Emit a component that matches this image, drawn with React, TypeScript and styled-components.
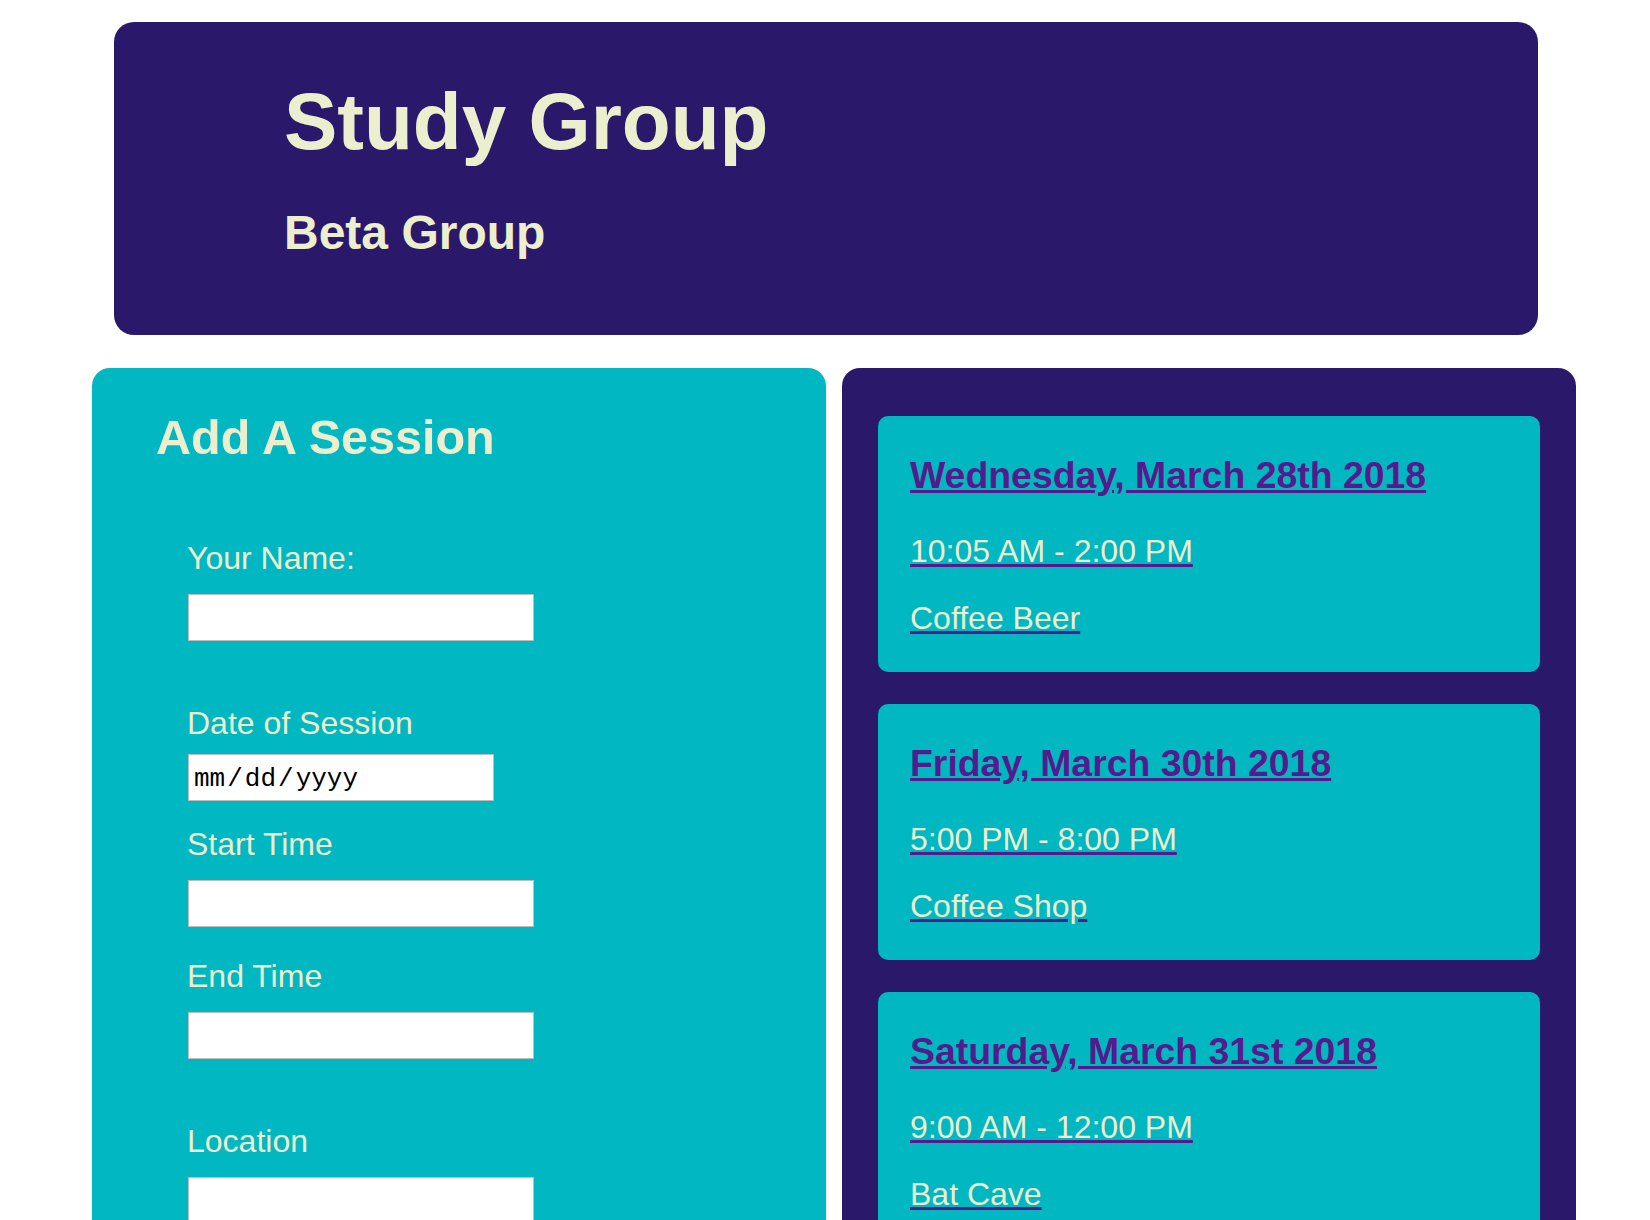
import React from "react";
import styled, { createGlobalStyle } from "styled-components";

const DARK = "#2a196b";
const TEAL = "#01b7c2";
const CREAM = "#ecefce";
const VISITED = "#551a8b";

const GlobalStyle = createGlobalStyle`
  html, body { margin: 0; padding: 0; background: #ffffff; }
  body { font-family: "Liberation Sans", Arial, Helvetica, sans-serif; }
  * { box-sizing: border-box; }
`;

const Page = styled.div`
  padding-top: 22px;
  overflow: hidden;
`;

const Header = styled.header`
  margin-left: 114px;
  width: 1424px;
  height: 313px;
  padding: 54px 0 0 170px;
  background: ${DARK};
  border-radius: 20px;
  color: ${CREAM};
`;

const Title = styled.h1`
  margin: 0;
  font-size: 80px;
  line-height: 92px;
  font-weight: 700;
`;

const Subtitle = styled.h2`
  margin: 38px 0 0;
  font-size: 48px;
  line-height: 54px;
  font-weight: 700;
`;

const Columns = styled.main`
  display: flex;
  align-items: flex-start;
  gap: 16px;
  margin-top: 33px;
  padding-left: 92px;
`;

const Panel = styled.section<{ $tone: "teal" | "dark" }>`
  width: 734px;
  border-radius: 18px;
  background: ${(p) => (p.$tone === "teal" ? TEAL : DARK)};
`;

const FormPanel = styled(Panel)`
  padding: 42px 0 80px 64px;
`;

const SessionsPanel = styled(Panel)`
  display: flex;
  flex-direction: column;
  gap: 32px;
  padding: 48px 36px 48px;
`;

const SectionTitle = styled.h2`
  margin: 0;
  font-size: 48.5px;
  line-height: 55px;
  font-weight: 700;
  color: ${CREAM};
`;

const Form = styled.form`
  display: flex;
  flex-direction: column;
  margin: 75px 0 0 31px;
`;

const Field = styled.div<{ $space: number }>`
  display: flex;
  flex-direction: column;
  align-items: flex-start;
  margin-top: ${(p) => p.$space}px;
`;

const Label = styled.label`
  display: block;
  font-size: 32px;
  line-height: 37px;
  color: ${CREAM};
`;

const TextInput = styled.input<{ $gap: number; $h: number; $w: number }>`
  display: block;
  width: ${(p) => p.$w}px;
  height: ${(p) => p.$h}px;
  margin: ${(p) => p.$gap}px 0 0 1px;
  padding: 0 4px;
  border: 1px solid #bdbdbd;
  border-radius: 0;
  background: #ffffff;
  font-family: "Liberation Mono", "Courier New", monospace;
  font-size: 26px;
  color: #000000;
  outline: none;

  &::-webkit-calendar-picker-indicator { display: none; }
  &::-webkit-datetime-edit { padding: 3px 0 0; color: #000000; }
  &::-webkit-datetime-edit-text { padding: 0 1px; color: #000000; }
  &::-webkit-datetime-edit-month-field,
  &::-webkit-datetime-edit-day-field,
  &::-webkit-datetime-edit-year-field { color: #000000; }
`;

const Card = styled.article`
  display: flex;
  flex-direction: column;
  align-items: flex-start;
  padding: 38px 32px 35px;
  border-radius: 10px;
  background: ${TEAL};
`;

const SessionLink = styled.a<{ $kind: "date" | "time" | "place" }>`
  display: block;
  margin-top: ${(p) => (p.$kind === "date" ? 0 : p.$kind === "time" ? 37 : 30)}px;
  font-size: ${(p) => (p.$kind === "date" ? 37.4 : 32)}px;
  line-height: ${(p) => (p.$kind === "date" ? 42 : 37)}px;
  font-weight: ${(p) => (p.$kind === "date" ? 700 : 400)};
  color: ${VISITED};
  text-decoration: underline;
  cursor: pointer;
`;

const LinkText = styled.span<{ $light: boolean }>`
  color: ${(p) => (p.$light ? CREAM : VISITED)};
`;

type Session = { date: string; time: string; place: string };

const sessions: Session[] = [
  { date: "Wednesday, March 28th 2018", time: "10:05 AM - 2:00 PM", place: "Coffee Beer" },
  { date: "Friday, March 30th 2018", time: "5:00 PM - 8:00 PM", place: "Coffee Shop" },
  { date: "Saturday, March 31st 2018", time: "9:00 AM - 12:00 PM", place: "Bat Cave" },
];

type FieldDef = {
  id: string;
  label: string;
  type: string;
  space: number;
  gap: number;
  h: number;
  w: number;
};

const fields: FieldDef[] = [
  { id: "name", label: "Your Name:", type: "text", space: 0, gap: 17, h: 47, w: 346 },
  { id: "date", label: "Date of Session", type: "date", space: 64, gap: 12, h: 47, w: 306 },
  { id: "start", label: "Start Time", type: "text", space: 25, gap: 17, h: 47, w: 346 },
  { id: "end", label: "End Time", type: "text", space: 31, gap: 17, h: 47, w: 346 },
  { id: "location", label: "Location", type: "text", space: 64, gap: 17, h: 47, w: 346 },
];

export default function App() {
  return (
    <>
      <GlobalStyle />
      <Page>
        <Header>
          <Title>Study Group</Title>
          <Subtitle>Beta Group</Subtitle>
        </Header>
        <Columns>
          <FormPanel $tone="teal">
            <SectionTitle>Add A Session</SectionTitle>
            <Form onSubmit={(e) => e.preventDefault()}>
              {fields.map((f) => (
                <Field key={f.id} $space={f.space}>
                  <Label htmlFor={f.id}>{f.label}</Label>
                  <TextInput id={f.id} type={f.type} $gap={f.gap} $h={f.h} $w={f.w} />
                </Field>
              ))}
            </Form>
          </FormPanel>
          <SessionsPanel $tone="dark">
            {sessions.map((s) => (
              <Card key={s.date}>
                <SessionLink $kind="date" href="#">
                  <LinkText $light={false}>{s.date}</LinkText>
                </SessionLink>
                <SessionLink $kind="time" href="#">
                  <LinkText $light>{s.time}</LinkText>
                </SessionLink>
                <SessionLink $kind="place" href="#">
                  <LinkText $light>{s.place}</LinkText>
                </SessionLink>
              </Card>
            ))}
          </SessionsPanel>
        </Columns>
      </Page>
    </>
  );
}
